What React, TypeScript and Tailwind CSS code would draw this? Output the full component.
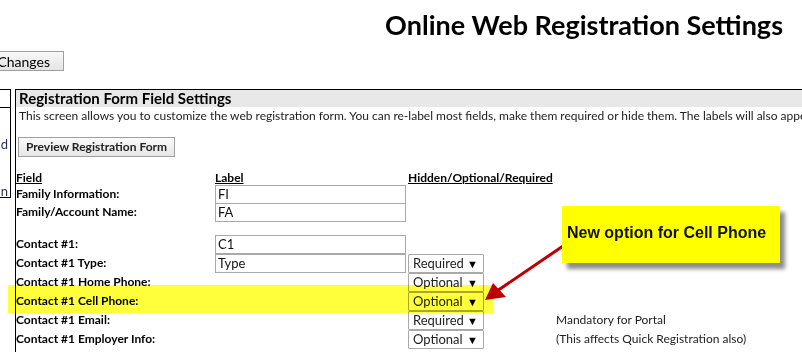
import React from 'react';

const rows = [
  { field: 'Family Information:', label: 'FI' },
  { field: 'Family/Account Name:', label: 'FA' },
];

const contactRows = [
  { field: 'Contact #1:', label: 'C1' },
  { field: 'Contact #1 Type:', label: 'Type', select: 'Required' },
  { field: 'Contact #1 Home Phone:', select: 'Optional' },
  { field: 'Contact #1 Cell Phone:', select: 'Optional' },
  { field: 'Contact #1 Email:', select: 'Required', note: 'Mandatory for Portal' },
  { field: 'Contact #1 Employer Info:', select: 'Optional', note: '(This affects Quick Registration also)' },
];

function LabelBox({ value }: { value: string }) {
  return (
    <div className="w-[191px] h-[19px] border border-[#a9a9a9] bg-white px-[2px] text-[13px] font-normal leading-[17px] text-[#111]">
      {value}
    </div>
  );
}

function FakeSelect({ value }: { value: string }) {
  return (
    <div className="w-[76px] h-[19px] border border-[#a9a9a9] rounded-[1px] bg-white flex items-center justify-between pl-[4px] pr-[5px] text-[13px] font-normal text-[#222]">
      <span>{value}</span>
      <span className="text-[11px] leading-none text-black">▼</span>
    </div>
  );
}

export default function App() {
  return (
    <div className="relative w-[802px] h-[352px] overflow-hidden bg-white text-black font-['Lato','Noto_Sans',sans-serif]">
      {/* Title */}
      <div className="h-[48px] flex items-center justify-end pr-[19px] pt-[1px]">
        <h1 className="text-[27px] font-bold leading-none">Online Web Registration Settings</h1>
      </div>

      {/* Save bar */}
      <div className="h-[41px] pt-[3px]">
        <div className="ml-[-38px] w-[102px] h-[20px] border border-[#a0a0a0] bg-gradient-to-b from-[#f8f8f8] to-[#e4e4e4] flex items-center justify-end pr-[13px] text-[14px]">
          Save Changes
        </div>
      </div>

      <div className="flex items-start">
        {/* left nav, cut off by the window */}
        <div className="shrink-0 w-[11px] h-[109px] border-t border-b border-r border-black flex flex-col overflow-hidden">
          <div className="h-[18px] border-b border-black" />
          <div className="flex-1 relative text-[13px] text-[#1f2f5f]">
            <span className="absolute right-[2px] top-[27px]">d</span>
            <span className="absolute right-[2px] top-[74px]">n</span>
          </div>
        </div>

        {/* main panel */}
        <div className="ml-[4px] flex-1 min-w-0 h-[264px] border-t-[1.5px] border-l-[1.5px] border-black overflow-hidden">
          <div className="h-[17px] bg-[#e8e8e8] pl-[3px] text-[15px] font-bold leading-[17px] whitespace-nowrap">
            Registration Form Field Settings
          </div>
          <div className="pl-[3px] text-[12px] leading-[17px] text-[#222] whitespace-nowrap">
            This screen allows you to customize the web registration form. You can re-label most fields, make them required or hide them. The labels will also appear on the confirmation.
          </div>
          <div className="pt-[13px] pl-[2px]">
            <div className="w-[157px] h-[20px] border border-[#a0a0a0] bg-gradient-to-b from-[#fafafa] to-[#e6e6e6] flex items-center justify-center text-[12px] font-bold text-[#222]">
              Preview Registration Form
            </div>
          </div>

          <div className="pt-[14px] text-[12px] font-bold">
            <div className="flex h-[14px] leading-[14px]">
              <span className="w-[199px] underline">Field</span>
              <span className="w-[193px] underline">Label</span>
              <span className="underline">Hidden/Optional/Required</span>
            </div>
            {rows.map((r) => (
              <div key={r.field} className="flex items-center h-[18px]">
                <span className="w-[199px]">{r.field}</span>
                <LabelBox value={r.label} />
              </div>
            ))}
            <div className="h-[14px]" />
            {contactRows.map((r) => (
              <div key={r.field} className="flex items-center h-[19px]">
                <span className="w-[199px] -mt-[2px]">{r.field}</span>
                <div className="w-[193px]">{r.label && <LabelBox value={r.label} />}</div>
                <div className="w-[148px]">{r.select && <FakeSelect value={r.select} />}</div>
                {r.note && <span className="-mt-[2px] text-[12px] font-normal text-[#222] whitespace-nowrap">{r.note}</span>}
              </div>
            ))}
          </div>
        </div>
      </div>

      {/* highlight band */}
      <div className="absolute left-[8px] top-[285px] w-[485px] h-[28px] bg-[#ffff3c] mix-blend-multiply" />

      {/* arrow */}
      <svg className="absolute left-0 top-0 pointer-events-none" width="802" height="352">
        <line x1="566" y1="244" x2="497" y2="291" stroke="#c00000" strokeWidth="3" />
        <polygon points="485,300 493,283 506,297" fill="#c00000" />
      </svg>

      {/* callout */}
      <div className="absolute left-[562px] top-[206px] w-[218px] h-[57px] bg-[#ffff00] shadow-[5px_6px_4px_rgba(0,0,0,0.45)] flex items-center pl-[5px] pb-[4px] font-['Liberation_Sans',Arial,sans-serif] text-[16px] font-bold text-[#111]">
        New option for Cell Phone
      </div>
    </div>
  );
}
